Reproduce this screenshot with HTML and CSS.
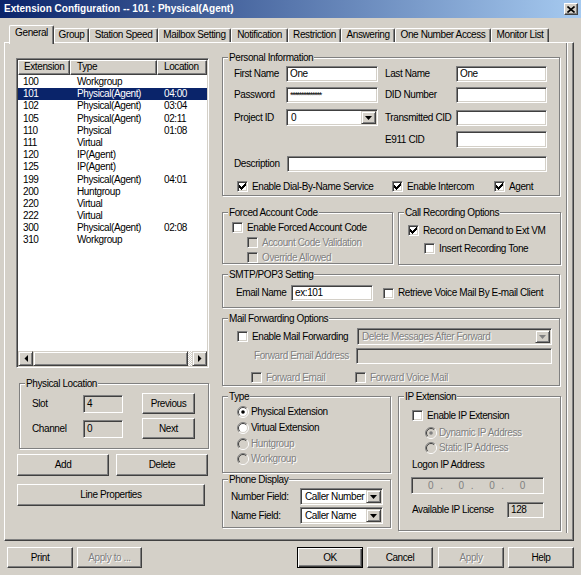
FILE: index.html
```html
<!DOCTYPE html>
<html lang="en">
<head>
<meta charset="utf-8">
<title>Extension Configuration</title>
<link rel="stylesheet" href="styles.css">
</head>
<body>
<div class="titlebar">
  <span class="title">Extension Configuration -- 101 : Physical(Agent)</span>
  <span class="closebox"><svg width="8" height="7" viewBox="0 0 8 7"><path d="M0.5 0.5 L7.5 6.5 M7.5 0.5 L0.5 6.5" stroke="#000" stroke-width="1.6"/></svg></span>
</div>
<div class="tabs">
  <div class="tab sel t-general">General</div>
  <div class="tab t-group">Group</div>
  <div class="tab t-speed">Station Speed</div>
  <div class="tab t-mailbox">Mailbox Setting</div>
  <div class="tab t-notif">Notification</div>
  <div class="tab t-restr">Restriction</div>
  <div class="tab t-answer">Answering</div>
  <div class="tab t-ona">One Number Access</div>
  <div class="tab t-monitor">Monitor List</div>
</div>
<div class="panel">
 <div class="page">
  <div class="leftcol">
   <div class="listbox">
    <div class="lhead"><div class="lh c1">Extension</div><div class="lh c2">Type</div><div class="lh c3">Location</div></div>
    <div class="lbody">
      <div class="lrow"><span>100</span><span>Workgroup</span><span></span></div>
      <div class="lrow selrow"><span>101</span><span>Physical(Agent)</span><span>04:00</span></div>
      <div class="lrow"><span>102</span><span>Physical(Agent)</span><span>03:04</span></div>
      <div class="lrow"><span>105</span><span>Physical(Agent)</span><span>02:11</span></div>
      <div class="lrow"><span>110</span><span>Physical</span><span>01:08</span></div>
      <div class="lrow"><span>111</span><span>Virtual</span><span></span></div>
      <div class="lrow"><span>120</span><span>IP(Agent)</span><span></span></div>
      <div class="lrow"><span>125</span><span>IP(Agent)</span><span></span></div>
      <div class="lrow"><span>199</span><span>Physical(Agent)</span><span>04:01</span></div>
      <div class="lrow"><span>200</span><span>Huntgroup</span><span></span></div>
      <div class="lrow"><span>220</span><span>Virtual</span><span></span></div>
      <div class="lrow"><span>222</span><span>Virtual</span><span></span></div>
      <div class="lrow"><span>300</span><span>Physical(Agent)</span><span>02:08</span></div>
      <div class="lrow"><span>310</span><span>Workgroup</span><span></span></div>
    </div>
    <div class="hscroll">
      <div class="sbtn"><svg width="4" height="7" viewBox="0 0 4 7"><path d="M4 0 V7 L0.5 3.5 Z" fill="#000"/></svg></div>
      <div class="thumb"></div>
      <div class="track"></div>
      <div class="sbtn"><svg width="4" height="7" viewBox="0 0 4 7"><path d="M0 0 V7 L3.5 3.5 Z" fill="#000"/></svg></div>
    </div>
   </div>
   <fieldset class="grp physloc">
     <legend>Physical Location</legend>
     <div class="plrow pl-first"><span class="pl-lbl">Slot</span><span class="field dis pl-field">4</span><div class="btn pl-btn">Previous</div></div>
     <div class="plrow"><span class="pl-lbl">Channel</span><span class="field dis pl-field">0</span><div class="btn pl-btn">Next</div></div>
   </fieldset>
   <div class="adddel"><div class="btn">Add</div><div class="btn del">Delete</div></div>
   <div class="btn lineprop">Line Properties</div>
  </div>

  <div class="rightcol">
   <fieldset class="grp pi">
     <legend>Personal Information</legend>
     <div class="frow pi-r1">
       <span class="lbl w52">First Name</span><span class="field w92">One</span>
       <span class="lbl w71 ml7">Last Name</span><span class="field w91">One</span>
     </div>
     <div class="frow pi-r2">
       <span class="lbl w52">Password</span><span class="field w92 pw">**************</span>
       <span class="lbl w71 ml7">DID Number</span><span class="field w91"></span>
     </div>
     <div class="frow pi-r3">
       <span class="lbl w52">Project ID</span>
       <span class="combo w92 h17"><span class="ctext">0</span><span class="dd"><svg width="7" height="4" viewBox="0 0 7 4"><path d="M0 0 H7 L3.5 4 Z" fill="#000"/></svg></span></span>
       <span class="lbl w71 ml7">Transmitted CID</span><span class="field w91"></span>
     </div>
     <div class="frow pi-r4">
       <span class="spacer151"></span>
       <span class="lbl w71">E911 CID</span><span class="field w91 h17"></span>
     </div>
     <div class="frow pi-r5">
       <span class="lbl w53">Description</span><span class="field w260"></span>
     </div>
     <div class="frow pi-r6">
       <span class="citem ci-dial"><span class="chk"><svg width="7" height="7" viewBox="0 0 7 7"><path d="M6 0h1v3h-1z M5 1h1v3h-1z M4 2h1v3h-1z M3 3h1v3h-1z M2 4h1v3h-1z M1 3h1v3h-1z M0 2h1v3h-1z" fill="#000"/></svg></span>Enable Dial-By-Name Service</span>
       <span class="citem ci-icom"><span class="chk"><svg width="7" height="7" viewBox="0 0 7 7"><path d="M6 0h1v3h-1z M5 1h1v3h-1z M4 2h1v3h-1z M3 3h1v3h-1z M2 4h1v3h-1z M1 3h1v3h-1z M0 2h1v3h-1z" fill="#000"/></svg></span>Enable Intercom</span>
       <span class="citem"><span class="chk"><svg width="7" height="7" viewBox="0 0 7 7"><path d="M6 0h1v3h-1z M5 1h1v3h-1z M4 2h1v3h-1z M3 3h1v3h-1z M2 4h1v3h-1z M1 3h1v3h-1z M0 2h1v3h-1z" fill="#000"/></svg></span>Agent</span>
     </div>
   </fieldset>

   <div class="duo">
     <fieldset class="grp fac">
       <legend>Forced Account Code</legend>
       <div class="frow fac-r1"><span class="citem"><span class="chk"></span>Enable Forced Account Code</span></div>
       <div class="frow fac-r2"><span class="citem dtext"><span class="chk dis"></span>Account Code Validation</span></div>
       <div class="frow fac-r2"><span class="citem dtext"><span class="chk dis"></span>Override Allowed</span></div>
     </fieldset>
     <fieldset class="grp cro">
       <legend>Call Recording Options</legend>
       <div class="frow cro-r1"><span class="citem"><span class="chk"><svg width="7" height="7" viewBox="0 0 7 7"><path d="M6 0h1v3h-1z M5 1h1v3h-1z M4 2h1v3h-1z M3 3h1v3h-1z M2 4h1v3h-1z M1 3h1v3h-1z M0 2h1v3h-1z" fill="#000"/></svg></span>Record on Demand to Ext VM</span></div>
       <div class="frow cro-r2"><span class="citem"><span class="chk"></span>Insert Recording Tone</span></div>
     </fieldset>
   </div>

   <fieldset class="grp smtp">
     <legend>SMTP/POP3 Setting</legend>
     <div class="frow smtp-r1">
       <span class="lbl w55">Email Name</span><span class="field w82">ex:101</span>
       <span class="citem ml10"><span class="chk"></span>Retrieve Voice Mail By E-mail Client</span>
     </div>
   </fieldset>

   <fieldset class="grp mfo">
     <legend>Mail Forwarding Options</legend>
     <div class="frow mfo-r1">
       <span class="citem w120"><span class="chk"></span>Enable Mail Forwarding</span>
       <span class="combo dis w195 h17"><span class="ctext dtext">Delete Messages After Forward</span><span class="dd"><svg width="7" height="4" viewBox="0 0 7 4"><path d="M0 0 H7 L3.5 4 Z" fill="#808080"/></svg></span></span>
     </div>
     <div class="frow mfo-r2">
       <span class="lbl dtext w102">Forward Email Address</span><span class="field dis w196"></span>
     </div>
     <div class="frow mfo-r3">
       <span class="citem dtext w104"><span class="chk dis"></span>Forward Email</span>
       <span class="citem dtext"><span class="chk dis"></span>Forward Voice Mail</span>
     </div>
   </fieldset>

   <div class="duo">
     <div class="subcol">
       <fieldset class="grp typ">
         <legend>Type</legend>
         <div class="rrow typ-r1"><svg class="radio" width="12" height="12" viewBox="0 0 12 12"><circle cx="6" cy="6" r="5" fill="#fff"/><path d="M2.1 9.9 A5.5 5.5 0 0 1 9.9 2.1" stroke="#808080" fill="none"/><path d="M9.9 2.1 A5.5 5.5 0 0 1 2.1 9.9" stroke="#fff" fill="none"/><path d="M2.8 9.2 A4.5 4.5 0 0 1 9.2 2.8" stroke="#404040" fill="none"/><path d="M9.2 2.8 A4.5 4.5 0 0 1 2.8 9.2" stroke="#d4d0c8" fill="none"/><circle cx="6" cy="6" r="1.8" fill="#000"/></svg><span class="rtext">Physical Extension</span></div>
         <div class="rrow"><svg class="radio" width="12" height="12" viewBox="0 0 12 12"><circle cx="6" cy="6" r="5" fill="#fff"/><path d="M2.1 9.9 A5.5 5.5 0 0 1 9.9 2.1" stroke="#808080" fill="none"/><path d="M9.9 2.1 A5.5 5.5 0 0 1 2.1 9.9" stroke="#fff" fill="none"/><path d="M2.8 9.2 A4.5 4.5 0 0 1 9.2 2.8" stroke="#404040" fill="none"/><path d="M9.2 2.8 A4.5 4.5 0 0 1 2.8 9.2" stroke="#d4d0c8" fill="none"/></svg><span class="rtext">Virtual Extension</span></div>
         <div class="rrow"><svg class="radio" width="12" height="12" viewBox="0 0 12 12"><circle cx="6" cy="6" r="5" fill="#d4d0c8"/><path d="M2.1 9.9 A5.5 5.5 0 0 1 9.9 2.1" stroke="#808080" fill="none"/><path d="M9.9 2.1 A5.5 5.5 0 0 1 2.1 9.9" stroke="#fff" fill="none"/><path d="M2.8 9.2 A4.5 4.5 0 0 1 9.2 2.8" stroke="#404040" fill="none"/><path d="M9.2 2.8 A4.5 4.5 0 0 1 2.8 9.2" stroke="#d4d0c8" fill="none"/></svg><span class="rtext dtext">Huntgroup</span></div>
         <div class="rrow typ-r4"><svg class="radio" width="12" height="12" viewBox="0 0 12 12"><circle cx="6" cy="6" r="5" fill="#d4d0c8"/><path d="M2.1 9.9 A5.5 5.5 0 0 1 9.9 2.1" stroke="#808080" fill="none"/><path d="M9.9 2.1 A5.5 5.5 0 0 1 2.1 9.9" stroke="#fff" fill="none"/><path d="M2.8 9.2 A4.5 4.5 0 0 1 9.2 2.8" stroke="#404040" fill="none"/><path d="M9.2 2.8 A4.5 4.5 0 0 1 2.8 9.2" stroke="#d4d0c8" fill="none"/></svg><span class="rtext dtext">Workgroup</span></div>
       </fieldset>
       <fieldset class="grp phd">
         <legend>Phone Display</legend>
         <div class="frow phd-r1">
           <span class="lbl w69">Number Field:</span>
           <span class="combo w83 h17"><span class="ctext">Caller Number</span><span class="dd"><svg width="7" height="4" viewBox="0 0 7 4"><path d="M0 0 H7 L3.5 4 Z" fill="#000"/></svg></span></span>
         </div>
         <div class="frow phd-r2">
           <span class="lbl w69">Name Field:</span>
           <span class="combo w83 h17"><span class="ctext">Caller Name</span><span class="dd"><svg width="7" height="4" viewBox="0 0 7 4"><path d="M0 0 H7 L3.5 4 Z" fill="#000"/></svg></span></span>
         </div>
       </fieldset>
     </div>
     <fieldset class="grp ipx">
       <legend>IP Extension</legend>
       <div class="frow ipx-r1"><span class="citem"><span class="chk"></span>Enable IP Extension</span></div>
       <div class="rrow ipx-r2"><svg class="radio" width="12" height="12" viewBox="0 0 12 12"><circle cx="6" cy="6" r="5" fill="#d4d0c8"/><path d="M2.1 9.9 A5.5 5.5 0 0 1 9.9 2.1" stroke="#808080" fill="none"/><path d="M9.9 2.1 A5.5 5.5 0 0 1 2.1 9.9" stroke="#fff" fill="none"/><path d="M2.8 9.2 A4.5 4.5 0 0 1 9.2 2.8" stroke="#404040" fill="none"/><path d="M9.2 2.8 A4.5 4.5 0 0 1 2.8 9.2" stroke="#d4d0c8" fill="none"/><circle cx="6" cy="6" r="1.8" fill="#808080"/></svg><span class="rtext dtext">Dynamic IP Address</span></div>
       <div class="rrow ipx-r3"><svg class="radio" width="12" height="12" viewBox="0 0 12 12"><circle cx="6" cy="6" r="5" fill="#d4d0c8"/><path d="M2.1 9.9 A5.5 5.5 0 0 1 9.9 2.1" stroke="#808080" fill="none"/><path d="M9.9 2.1 A5.5 5.5 0 0 1 2.1 9.9" stroke="#fff" fill="none"/><path d="M2.8 9.2 A4.5 4.5 0 0 1 9.2 2.8" stroke="#404040" fill="none"/><path d="M9.2 2.8 A4.5 4.5 0 0 1 2.8 9.2" stroke="#d4d0c8" fill="none"/></svg><span class="rtext dtext">Static IP Address</span></div>
       <div class="frow ipx-r4"><span class="lbl">Logon IP Address</span></div>
       <div class="frow ipx-r5"><span class="field dis ipfield"><span class="oct">0</span><span class="ipdot">.</span><span class="oct">0</span><span class="ipdot">.</span><span class="oct">0</span><span class="ipdot">.</span><span class="oct">0</span></span></div>
       <div class="frow ipx-r6"><span class="lbl w95">Available IP License</span><span class="field dis w37">128</span></div>
     </fieldset>
   </div>
  </div>
 </div>
</div>
<div class="bottombar">
  <div class="btn bb-print">Print</div>
  <div class="btn dis bb-applyto">Apply to ...</div>
  <div class="btn default bb-ok">OK</div>
  <div class="btn bb-cancel">Cancel</div>
  <div class="btn dis bb-apply">Apply</div>
  <div class="btn bb-help">Help</div>
</div>
</body>
</html>
```

FILE: styles.css
```css
* { box-sizing: border-box; }
html, body { margin: 0; padding: 0; }
body {
  width: 581px; height: 575px; overflow: hidden;
  background: #d4d0c8;
  font-family: "Liberation Sans", Arial, sans-serif;
  font-size: 10px; line-height: 12px; letter-spacing: -0.4px;
  color: #000;
}

/* title bar */
.titlebar {
  height: 18px; display: flex; align-items: center;
  background: linear-gradient(to right, #0a246a, #a6caf0);
}
.title { color: #fff; font-weight: bold; letter-spacing: 0; padding-left: 4px; }
.closebox {
  margin-left: auto; margin-right: 3px;
  width: 14px; height: 12px;
  background: #d4d0c8;
  border: 1px solid; border-color: #fff #404040 #404040 #fff;
  box-shadow: inset -1px -1px #808080;
  display: flex; align-items: center; justify-content: center;
}
.closebox svg { display: block; }

/* tabs */
.tabs { display: flex; align-items: flex-start; height: 17px; margin-top: 7px; padding-left: 9px; }
.tab {
  height: 14px; margin-top: 3px;
  border-top: 1px solid #fff; border-left: 1px solid #fff; border-right: 1px solid #404040;
  box-shadow: inset -1px 0 #808080;
  border-radius: 2px 2px 0 0;
  text-align: center; line-height: 12px;
}
.tab.sel { height: 19px; margin-top: 0; padding-top: 1px; position: relative; z-index: 1; background: #d4d0c8; }
.t-general { width: 45px; }
.t-group { width: 35px; }
.t-speed { width: 69px; }
.t-mailbox { width: 73px; }
.t-notif { width: 57px; }
.t-restr { width: 53px; }
.t-answer { width: 54px; }
.t-ona { width: 96px; }
.t-monitor { width: 58px; }

/* panel */
.panel {
  margin-left: 4px; width: 570px; height: 499px;
  border: 1px solid; border-color: #fff #404040 #404040 #fff;
  box-shadow: inset -1px -1px #808080;
}
.page {
  display: flex; width: 562px; height: 490px;
  padding-left: 11px;
  border-right: 1px solid #808080;
  box-shadow: 1px 0 #fff;
}
.leftcol { width: 193px; flex: none; display: flex; flex-direction: column; padding-top: 15px; }
.rightcol { width: 339px; flex: none; margin-left: 13px; display: flex; flex-direction: column; padding-top: 9px; }

/* common controls */
.field {
  display: flex; align-items: center; flex: none;
  height: 16px;
  background: #fff;
  border: 1px solid; border-color: #808080 #fff #fff #808080;
  box-shadow: inset 1px 1px #404040, inset -1px -1px #d4d0c8;
  padding: 1px 1px 1px 3px;
  white-space: nowrap; overflow: hidden;
}
.field.dis { background: #d4d0c8; }
.pw { letter-spacing: -1.3px; font-size: 9px; }
.combo {
  display: flex; align-items: stretch; flex: none;
  background: #fff;
  border: 1px solid; border-color: #808080 #fff #fff #808080;
  box-shadow: inset 1px 1px #404040, inset -1px -1px #d4d0c8;
  padding: 1px;
}
.combo.dis { background: #d4d0c8; }
.ctext { flex: 1; display: flex; align-items: center; padding-left: 3px; white-space: nowrap; overflow: hidden; }
.dd {
  width: 15px; flex: none;
  background: #d4d0c8;
  border: 1px solid; border-color: #d4d0c8 #404040 #404040 #d4d0c8;
  box-shadow: inset 1px 1px #fff, inset -1px -1px #808080;
  display: flex; align-items: center; justify-content: center;
}
.dd svg { display: block; }
.btn {
  display: flex; align-items: center; justify-content: center; flex: none;
  background: #d4d0c8;
  border: 1px solid; border-color: #fff #404040 #404040 #fff;
  box-shadow: inset -1px -1px #808080;
  white-space: nowrap;
}
.btn.default {
  border: 1px solid #000;
  box-shadow: inset 1px 1px #fff, inset -1px -1px #404040, inset -2px -2px #808080;
}
.btn.dis, .dtext { color: #808080; text-shadow: 1px 1px 0 #fff; }

.chk {
  width: 11px; height: 11px; flex: none;
  background: #fff;
  border: 1px solid; border-color: #808080 #fff #fff #808080;
  box-shadow: inset 1px 1px #404040, inset -1px -1px #d4d0c8;
  margin-right: 4px;
}
.chk.dis { background: #d4d0c8; }
.chk svg { display: block; margin: 1px; }
.citem { display: flex; align-items: center; white-space: nowrap; flex: none; }
.radio { display: block; flex: none; }
.rrow { display: flex; align-items: center; height: 12px; }
.rtext { margin-left: 2px; white-space: nowrap; }

/* group boxes */
.grp {
  margin: 0; padding: 0; min-width: 0;
  border: 1px solid #808080;
  box-shadow: inset 1px 1px #fff, 1px 1px #fff;
  flex: none;
}
.grp > legend {
  padding: 0 1px; margin-left: 5px;
  height: 11px; line-height: 11px;
  background: #d4d0c8;
  white-space: nowrap;
}
.frow { display: flex; align-items: center; }
.lbl { flex: none; white-space: nowrap; }

/* widths */
.w37 { width: 37px; }
.w52 { width: 52px; }
.w53 { width: 53px; }
.w55 { width: 55px; }
.w69 { width: 69px; }
.w71 { width: 71px; }
.w82 { width: 82px; }
.w83 { width: 83px; }
.w91 { width: 91px; }
.w92 { width: 92px; }
.w95 { width: 95px; }
.w102 { width: 102px; }
.w104 { width: 104px; }
.w120 { width: 120px; }
.w195 { width: 195px; }
.w196 { width: 196px; }
.w260 { width: 260px; }
.h17 { height: 17px; }
.ml7 { margin-left: 7px; }
.ml10 { margin-left: 10px; }
.spacer151 { width: 151px; flex: none; }

/* list box */
.listbox {
  margin-top: 0; width: 193px; height: 310px;
  background: #fff;
  border: 1px solid; border-color: #808080 #fff #fff #808080;
  box-shadow: inset 1px 1px #404040, inset -1px -1px #d4d0c8;
  padding: 1px;
  display: flex; flex-direction: column;
}
.lhead { display: flex; height: 15px; flex: none; }
.lh {
  height: 15px; background: #d4d0c8;
  border: 1px solid; border-color: #fff #404040 #404040 #fff;
  box-shadow: inset -1px -1px #808080;
  padding-left: 5px; line-height: 12px;
}
.lh.c1 { width: 52px; }
.lh.c2 { width: 87px; padding-left: 6px; }
.lh.c3 { width: 50px; padding-left: 6px; }
.lbody { flex: 1; padding-top: 1px; }
.lrow { display: grid; grid-template-columns: 52px 87px 50px; height: 12.2px; line-height: 12.2px; white-space: nowrap; }
.lrow span:nth-child(1) { padding-left: 5px; }
.lrow span:nth-child(2), .lrow span:nth-child(3) { padding-left: 7px; }
.selrow { background: #0a246a; color: #fff; }
.hscroll { display: flex; height: 15px; flex: none; }
.sbtn, .thumb {
  background: #d4d0c8;
  border: 1px solid; border-color: #d4d0c8 #404040 #404040 #d4d0c8;
  box-shadow: inset 1px 1px #fff, inset -1px -1px #808080;
}
.sbtn { width: 15px; display: flex; align-items: center; justify-content: center; flex: none; }
.sbtn svg { display: block; }
.thumb { flex: 1; }
.track {
  width: 4px; flex: none;
  background-image: conic-gradient(#fff 25%, #d4d0c8 0 50%, #fff 0 75%, #d4d0c8 0);
  background-size: 2px 2px;
}

/* physical location */
.physloc { margin-top: 10px; margin-left: 3px; width: 190px; height: 71px; }
.plrow { display: flex; align-items: center; height: 21px; margin-top: 4px; padding-left: 12px; }
.pl-lbl { width: 51px; flex: none; }
.pl-field { width: 40px; height: 18px; }
.pl-btn { width: 53px; height: 21px; margin-left: 19px; }
.adddel { display: flex; margin-top: 5px; padding-left: 1px; }
.adddel .btn { width: 92px; height: 22px; }
.adddel .del { margin-left: 7px; }
.lineprop { width: 188px; height: 22px; margin-top: 8px; margin-left: 1px; }

/* personal information */
.pi { width: 338px; height: 144px; }
.pi .frow { padding-left: 11px; }
.pi-r1 { margin-top: 3px; }
.pi-r2 { margin-top: 5px; }
.pi-r3 { margin-top: 6px; }
.pi-r4 { margin-top: 5px; }
.pi-r5 { margin-top: 8px; }
.pi .pi-r6 { margin-top: 9px; padding-left: 14px; height: 11px; }
.ci-dial { width: 155px; }
.ci-icom { width: 102px; }

.duo { display: flex; align-items: flex-start; }
.fac { margin-top: 11px; width: 171px; height: 57px; }
.fac-r1 { margin-top: 4px; padding-left: 9px; height: 11px; }
.fac-r2 { margin-top: 4px; padding-left: 24px; height: 11px; }
.cro { margin-top: 11px; margin-left: 5px; width: 163px; height: 58px; }
.cro-r1 { margin-top: 7px; padding-left: 9px; height: 11px; }
.cro-r2 { margin-top: 7px; padding-left: 25px; height: 11px; }

.smtp { margin-top: 4px; width: 338px; height: 39px; }
.smtp-r1 { margin-top: 5px; padding-left: 13px; }

.mfo { margin-top: 5px; width: 338px; height: 73px; }
.mfo-r1 { margin-top: 4px; padding-left: 14px; }
.mfo-r2 { margin-top: 3px; padding-left: 31px; }
.mfo-r3 { margin-top: 8px; padding-left: 28px; height: 11px; }

.subcol { display: flex; flex-direction: column; width: 169px; flex: none; margin-top: 5px; }
.typ { width: 169px; height: 82px; }
.typ .rrow { padding-left: 14px; margin-top: 4px; }
.typ .typ-r4 { margin-top: 3px; }
.phd { margin-top: 1px; width: 169px; height: 54px; }
.phd-r1 { margin-top: 3px; padding-left: 8px; }
.phd-r2 { margin-top: 2px; padding-left: 8px; }

.ipx { margin-top: 5px; margin-left: 7px; width: 163px; height: 140px; }
.ipx-r1 { margin-top: 8px; padding-left: 13px; height: 11px; }
.ipx .ipx-r2 { margin-top: 6px; padding-left: 26px; }
.ipx .ipx-r3 { margin-top: 3px; padding-left: 26px; }
.ipx-r4 { margin-top: 5px; padding-left: 13px; height: 12px; }
.ipx-r5 { margin-top: 6px; padding-left: 12px; }
.ipfield { width: 133px; height: 17px; padding-left: 16px; color: #808080; }
.oct { margin-right: 7px; }
.ipdot { margin-right: 16px; }
.ipx-r6 { margin-top: 8px; padding-left: 13px; }

/* bottom bar */
.bottombar { display: flex; margin-top: 6px; padding-left: 7px; height: 21px; }
.bottombar .btn { width: 66px; height: 21px; }
.bottombar .bb-applyto { margin-left: 4px; width: 65px; }
.bottombar .bb-ok { margin-left: 155px; }
.bottombar .bb-cancel { margin-left: 4px; }
.bottombar .bb-apply { margin-left: 5px; }
.bottombar .bb-help { margin-left: 4px; }
```
